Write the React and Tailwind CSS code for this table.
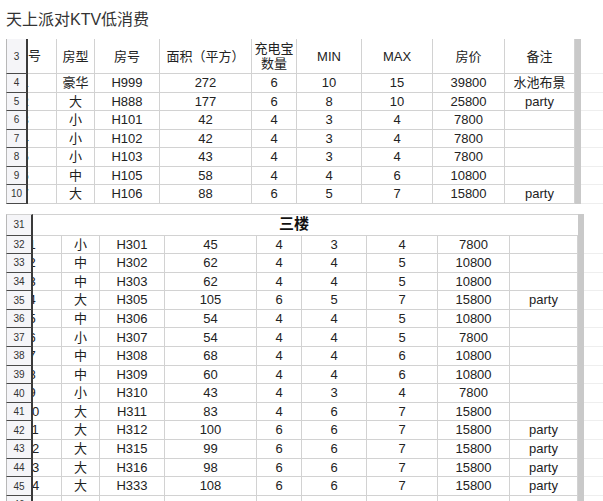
import React from "react";

const FONT = { fontFamily: '"Liberation Sans", "Noto Sans CJK SC", "Noto Sans", sans-serif' };

const topWidths = [22, 29, 38, 65, 92, 45, 65, 71, 72, 70];
const botWidths = [27, 29, 38, 65, 92, 45, 65, 71, 72, 68];

const topRows = [
  ["4", "1", "豪华", "H999", "272", "6", "10", "15", "39800", "水池布景"],
  ["5", "2", "大", "H888", "177", "6", "8", "10", "25800", "party"],
  ["6", "3", "小", "H101", "42", "4", "3", "4", "7800", ""],
  ["7", "4", "小", "H102", "42", "4", "3", "4", "7800", ""],
  ["8", "5", "小", "H103", "43", "4", "3", "4", "7800", ""],
  ["9", "6", "中", "H105", "58", "4", "4", "6", "10800", ""],
  ["10", "7", "大", "H106", "88", "6", "5", "7", "15800", "party"],
];

const botRows = [
  ["32", "1", "小", "H301", "45", "4", "3", "4", "7800", ""],
  ["33", "2", "中", "H302", "62", "4", "4", "5", "10800", ""],
  ["34", "3", "中", "H303", "62", "4", "4", "5", "10800", ""],
  ["35", "4", "大", "H305", "105", "6", "5", "7", "15800", "party"],
  ["36", "5", "中", "H306", "54", "4", "4", "5", "10800", ""],
  ["37", "6", "小", "H307", "54", "4", "4", "5", "7800", ""],
  ["38", "7", "中", "H308", "68", "4", "4", "6", "10800", ""],
  ["39", "8", "中", "H309", "60", "4", "4", "6", "10800", ""],
  ["40", "9", "小", "H310", "43", "4", "3", "4", "7800", ""],
  ["41", "10", "大", "H311", "83", "4", "6", "7", "15800", ""],
  ["42", "11", "大", "H312", "100", "6", "6", "7", "15800", "party"],
  ["43", "12", "大", "H315", "99", "6", "6", "7", "15800", "party"],
  ["44", "13", "大", "H316", "98", "6", "6", "7", "15800", "party"],
  ["45", "14", "大", "H333", "108", "6", "6", "7", "15800", "party"],
];

function RowHeader({ width, children }) {
  return (
    <div
      className="shrink-0 flex items-center justify-center border-l border-l-[#b8b8b8] border-r-2 border-r-[#3a3a3a] border-b border-b-[#4a4a4a] bg-[#f5f5f8] text-[10px] text-[#333]"
      style={{ width }}
    >
      {children}
    </div>
  );
}

function ClipCell({ width, shiftClass, children }) {
  return (
    <div
      className="shrink-0 flex items-center overflow-hidden border-r border-b border-[#d2d2d2]"
      style={{ width }}
    >
      <div className={`shrink-0 w-[40px] ${shiftClass} text-center text-[13px] text-[#222]`}>{children}</div>
    </div>
  );
}

function Row({ widths, cells, heightClass, shiftClass }) {
  return (
    <div className={`flex ${heightClass}`}>
      <RowHeader width={widths[0]}>{cells[0]}</RowHeader>
      {cells.slice(1).map((c, i) => {
        const w = widths[i + 1];
        if (i === 0) return <ClipCell key={i} width={w} shiftClass={shiftClass}>{c}</ClipCell>;
        return (
          <div
            key={i}
            className="shrink-0 flex items-center justify-center border-r border-b border-[#d2d2d2] text-[13px] text-[#222] whitespace-nowrap"
            style={{ width: w }}
          >
            {c}
          </div>
        );
      })}
      <div className="shrink-0 w-[6px] bg-[#c9c9c9]" />
      <div className="flex-1 border-b border-[#eeeeee]" />
    </div>
  );
}

function TopHeader() {
  const w = topWidths;
  const labels = ["序号", "房型", "房号", "面积（平方）", "充电宝\n数量", "MIN", "MAX", "房价", "备注"];
  return (
    <div className="flex h-[35px]">
      <RowHeader width={w[0]}>3</RowHeader>
      {labels.map((l, i) => {
        if (i === 0) return <ClipCell key={i} width={w[1]} shiftClass="-ml-[20px]">{l}</ClipCell>;
        return (
          <div
            key={i}
            className="shrink-0 flex items-center justify-center border-r border-b border-[#d2d2d2] text-[13px] leading-[15px] text-[#222] text-center whitespace-pre"
            style={{ width: w[i + 1] }}
          >
            {l}
          </div>
        );
      })}
      <div className="shrink-0 w-[6px] bg-[#c9c9c9]" />
      <div className="flex-1 border-b border-[#eeeeee]" />
    </div>
  );
}

export default function App() {
  return (
    <div className="w-[603px] h-[501px] overflow-hidden bg-white" style={FONT}>
      <div className="h-[39px] pl-[6px] pt-[10px] text-[16px] leading-[20px] text-[#333]">天上派对KTV低消费</div>

      <div className="flex flex-col pl-[6px]">
        <TopHeader />
        {topRows.map((r) => (
          <Row key={r[0]} widths={topWidths} cells={r} heightClass="h-[18.5px]" shiftClass="-ml-[23px]" />
        ))}
      </div>

      <div className="h-[10px]" />

      <div className="flex flex-col pl-[6px]">
        <div className="flex h-[22px]">
          <div className="shrink-0 w-[27px] flex items-center justify-center border-l border-l-[#b8b8b8] border-t border-t-[#d2d2d2] border-r-2 border-r-[#3a3a3a] border-b border-b-[#4a4a4a] bg-[#f5f5f8] text-[10px] text-[#333]">
            31
          </div>
          <div className="shrink-0 w-[545px] flex items-center justify-center pr-[23px] border-t border-b border-[#d2d2d2] text-[15px] font-bold text-[#111]">
            三楼
          </div>
          <div className="shrink-0 w-[6px] bg-[#c9c9c9]" />
          <div className="flex-1" />
        </div>
        {botRows.map((r) => (
          <Row key={r[0]} widths={botWidths} cells={r} heightClass="h-[18.6px]" shiftClass="-ml-[21px]" />
        ))}
        <Row widths={botWidths} cells={["46", "", "", "", "", "", "", "", "", ""]} heightClass="h-[18.6px]" shiftClass="-ml-[21px]" />
      </div>
    </div>
  );
}
